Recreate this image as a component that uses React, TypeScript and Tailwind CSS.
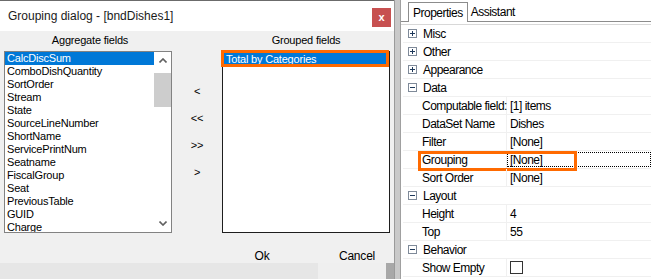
import React from "react";

const aggregate = [
  "CalcDiscSum",
  "ComboDishQuantity",
  "SortOrder",
  "Stream",
  "State",
  "SourceLineNumber",
  "ShortName",
  "ServicePrintNum",
  "Seatname",
  "FiscalGroup",
  "Seat",
  "PreviousTable",
  "GUID",
  "Charge",
];

type Row =
  | { kind: "cat"; label: string; open: boolean }
  | { kind: "prop"; label: string; value: string; highlight?: boolean; check?: boolean };

const rows: Row[] = [
  { kind: "cat", label: "Misc", open: false },
  { kind: "cat", label: "Other", open: false },
  { kind: "cat", label: "Appearance", open: false },
  { kind: "cat", label: "Data", open: true },
  { kind: "prop", label: "Computable field:", value: "[1] items" },
  { kind: "prop", label: "DataSet Name", value: "Dishes" },
  { kind: "prop", label: "Filter", value: "[None]" },
  { kind: "prop", label: "Grouping", value: "[None]", highlight: true },
  { kind: "prop", label: "Sort Order", value: "[None]" },
  { kind: "cat", label: "Layout", open: true },
  { kind: "prop", label: "Height", value: "4" },
  { kind: "prop", label: "Top", value: "55" },
  { kind: "cat", label: "Behavior", open: true },
  { kind: "prop", label: "Show Empty", value: "", check: true },
];

function PlusBox({ open }: { open: boolean }) {
  return (
    <svg width="9" height="9" viewBox="0 0 9 9" className="shrink-0">
      <rect x="0.5" y="0.5" width="8" height="8" fill="#fff" stroke="#7f8a99" />
      <line x1="2" y1="4.5" x2="7" y2="4.5" stroke="#1e395b" />
      {!open && <line x1="4.5" y1="2" x2="4.5" y2="7" stroke="#1e395b" />}
    </svg>
  );
}

export default function App() {
  const sans = { fontFamily: '"Liberation Sans", Arial, sans-serif' };
  return (
    <div className="w-[651px] h-[279px] overflow-hidden flex bg-[#e3e3e3] text-black" style={sans}>
      {/* Dialog */}
      <div className="w-[394px] shrink-0 flex flex-col">
        <div className="h-[31px] shrink-0 bg-white flex items-center justify-between pl-[8px] pr-[3px] border-t border-[#6b6b6b]">
          <span className="text-[12px] text-[#1a1a1a]">Grouping dialog - [bndDishes1]</span>
          <div className="w-[19px] h-[19px] bg-[#c75050] flex items-center justify-center text-white text-[11px] font-bold mt-[2px]">
            x
          </div>
        </div>
        <div className="h-[232px] shrink-0 bg-[#f0f0f0] flex flex-col text-[11px] tracking-[-0.2px]">
          <div className="flex h-[20px] shrink-0 items-start pt-[3px] leading-[13px]">
            <div className="w-[176px] text-center pl-[4px]">Aggregate fields</div>
            <div className="w-[46px]" />
            <div className="w-[168px] text-center">Grouped fields</div>
          </div>
          <div className="flex shrink-0">
            {/* Aggregate list */}
            <div className="ml-[4px] w-[168px] h-[182px] border border-[#828282] bg-white flex overflow-hidden">
              <div className="flex-1 flex flex-col leading-[13px] overflow-hidden">
                {aggregate.map((a, i) => (
                  <div
                    key={a}
                    className={
                      "h-[13px] shrink-0 pl-[2px] " +
                      (i === 0 ? "bg-[#0078d7] text-white" : "")
                    }
                  >
                    {a}
                  </div>
                ))}
              </div>
              <div className="w-[17px] flex flex-col items-center bg-white">
                <div className="h-[17px] shrink-0 flex items-center justify-center">
                  <svg width="8" height="5" viewBox="0 0 8 5">
                    <path d="M0.5 4.5 L4 1 L7.5 4.5" fill="none" stroke="#606060" strokeWidth="1.6" />
                  </svg>
                </div>
                <div className="w-[17px] h-[34px] shrink-0 bg-[#cdcdcd] mt-[4px]" />
                <div className="flex-1" />
                <div className="h-[17px] shrink-0 flex items-center justify-center">
                  <svg width="8" height="5" viewBox="0 0 8 5">
                    <path d="M0.5 0.5 L4 4 L7.5 0.5" fill="none" stroke="#606060" strokeWidth="1.6" />
                  </svg>
                </div>
              </div>
            </div>
            {/* Buttons */}
            <div className="w-[50px] flex flex-col items-center pt-[34px] gap-[14px] leading-[13px]">
              <div>&lt;</div>
              <div>&lt;&lt;</div>
              <div>&gt;&gt;</div>
              <div>&gt;</div>
            </div>
            {/* Grouped list */}
            <div className="w-[168px] h-[182px] border border-[#1e1e1e] bg-white relative">
              <div className="mx-[1px] mt-[1px] h-[12px] bg-[#0078d7] text-white leading-[12px] pl-[2px]">
                Total by Categories
              </div>
              <div className="absolute left-[-2px] top-[-2px] w-[168px] h-[17px] border-[3px] border-[#ff6a00]" />
            </div>
          </div>
          <div className="flex shrink-0 mt-[16px] text-[12px] leading-[14px]">
            <div className="w-[252px]" />
            <div className="w-[20px] text-center">Ok</div>
            <div className="w-[62px]" />
            <div className="w-[46px] text-center">Cancel</div>
          </div>
        </div>
        <div className="flex-1 flex">
          <div className="w-[318px] bg-[#e6e6e6]" />
          <div className="w-[68px] bg-[#efefef]" />
          <div className="flex-1 bg-[#a8a8a8]" />
        </div>
      </div>
      {/* Gap strip */}
      <div className="w-[6px] shrink-0 bg-[#c9c9c9] border-l border-[#9a9a9a]" />
      {/* Properties panel */}
      <div className="flex-1 flex flex-col bg-white border-l border-[#a0a0a0] text-[12px] tracking-[-0.5px] whitespace-nowrap">
        <div className="h-[22px] shrink-0 flex items-end pl-[7px] border-b border-[#8c8c8c] bg-white">
          <div className="h-[20px] px-[4px] border border-b-0 border-[#8c8c8c] bg-white flex items-center -mb-px">
            Properties
          </div>
          <div className="h-[19px] px-[3px] flex items-center">Assistant</div>
        </div>
        <div className="h-[2px] shrink-0" />
        <div className="flex-1 flex flex-col pl-[2px] border-t border-[#d8d8d8]">
          {rows.map((r, i) => (
            <div key={i} className="h-[18px] shrink-0 flex border-b border-[#f0f0f0] relative">
              {r.kind === "cat" ? (
                <div className="flex items-center pl-[5px] gap-[6px]">
                  <PlusBox open={r.open} />
                  <span>{r.label}</span>
                </div>
              ) : (
                <>
                  <div className="w-[104px] shrink-0 pl-[19px] flex items-center border-r border-[#f0f0f0]">
                    {r.label}
                  </div>
                  <div className="flex-1 pl-[3px] flex items-center relative">
                    {r.check ? (
                      <div className="w-[13px] h-[13px] border border-[#333] bg-white" />
                    ) : (
                      r.value
                    )}
                    {r.highlight && (
                      <div className="absolute left-0 right-0 top-[1px] bottom-[1px] border border-dotted border-black" />
                    )}
                  </div>
                  {r.highlight && (
                    <div className="absolute left-[15px] top-[0px] w-[159px] h-[20px] border-[3px] border-[#ff6a00]" />
                  )}
                </>
              )}
            </div>
          ))}
        </div>
      </div>
    </div>
  );
}
